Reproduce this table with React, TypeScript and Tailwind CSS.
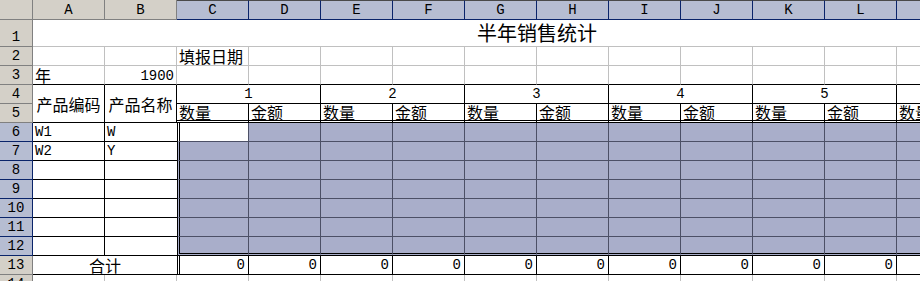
import React from 'react';

const cols = ['A', 'B', 'C', 'D', 'E', 'F', 'G', 'H', 'I', 'J', 'K', 'L', 'M'];
const mono = "font-['Liberation_Mono',monospace] text-[14px]";
const cjk = "font-['Noto_Sans_CJK_SC',sans-serif] text-[16px]";
const base = 'flex whitespace-nowrap leading-none px-[2px]';

const RowHead = ({ n, sel = false }: { n: number; sel?: boolean }) => (
  <div
    className={`${base} ${mono} items-end justify-center pb-[2px] border-r border-b ${
      sel ? 'bg-[#b6bdd2] border-[#0a246a]' : 'bg-[#d4d0c8] border-[#808080]'
    }`}
  >
    {n}
  </div>
);

const App: React.FC = () => {
  const data: Record<number, [string, string]> = { 6: ['W1', 'W'], 7: ['W2', 'Y'] };

  return (
    <div className="w-[920px] h-[281px] overflow-hidden bg-white text-black">
      <div className="grid grid-cols-[33px_repeat(13,72px)] grid-rows-[20px_27px_repeat(13,19px)]">
        {/* column headers */}
        <div className="bg-[#d4d0c8] border-r border-b border-[#808080]" />
        {cols.map((c, i) => (
          <div
            key={c}
            className={`${base} ${mono} items-center justify-center border-r border-b ${
              i >= 2
                ? 'bg-[#b6bdd2] border-[#0a246a] border-t border-t-[#4a4a4a]'
                : 'bg-[#d4d0c8] border-[#808080]'
            }`}
          >
            {c}
          </div>
        ))}

        {/* row 1: title */}
        <RowHead n={1} />
        <div className="col-span-13 border-b border-[#c0c0c0]">
          <div className="w-[1008px] h-full flex items-end justify-center pb-[3px] leading-none font-['Noto_Sans_CJK_SC',sans-serif] text-[20px]">
            半年销售统计
          </div>
        </div>

        {/* row 2 */}
        <RowHead n={2} />
        {cols.map((c) => (
          <div key={c} className={`${base} ${cjk} items-end pb-[1px] border-r border-b border-[#c0c0c0]`}>
            {c === 'C' ? '填报日期' : ''}
          </div>
        ))}

        {/* row 3 */}
        <RowHead n={3} />
        {cols.map((c) => (
          <div
            key={c}
            className={`${base} items-end pb-[1px] border-r border-b border-[#c0c0c0] border-b-black ${
              c === 'A' ? cjk : `${mono} justify-end`
            }`}
          >
            {c === 'A' ? '年' : c === 'B' ? '1900' : ''}
          </div>
        ))}

        {/* rows 4-5: headers */}
        <RowHead n={4} />
        <div className={`${base} ${cjk} row-span-2 items-center justify-center border-r border-b border-black`}>产品编码</div>
        <div className={`${base} ${cjk} row-span-2 items-center justify-center border-r border-b border-black`}>产品名称</div>
        {[1, 2, 3, 4, 5].map((m) => (
          <div key={m} className={`${base} ${mono} col-span-2 items-end justify-center pb-[2px] border-r border-b border-black`}>
            {m}
          </div>
        ))}
        <div className={`${base} border-r border-b border-black`} />

        <RowHead n={5} />
        {cols.slice(2).map((c, i) => (
          <div
            key={c}
            className={`${base} ${cjk} items-end border-r border-black border-b-[3px] border-double`}
          >
            {i % 2 === 0 ? '数量' : '金额'}
          </div>
        ))}

        {/* rows 6-12: selection */}
        {[6, 7, 8, 9, 10, 11, 12].map((r) => (
          <React.Fragment key={r}>
            <RowHead n={r} sel />
            <div className={`${base} ${mono} items-end pb-[2px] border-r border-b border-black`}>{data[r]?.[0] ?? ''}</div>
            <div className={`${base} ${mono} items-end pb-[2px] border-b border-black`}>{data[r]?.[1] ?? ''}</div>
            {cols.slice(2).map((c, i) => (
              <div
                key={c}
                className={[
                  'border-r border-[#4c5066]',
                  r === 6 && i === 0 ? 'bg-white' : 'bg-[#a9aeca]',
                  i === 0 ? 'border-l-[3px] border-l-black border-double' : '',
                  r === 12 ? 'border-b-[3px] border-b-black border-double' : 'border-b',
                ].join(' ')}
              />
            ))}
          </React.Fragment>
        ))}

        {/* row 13: totals */}
        <RowHead n={13} />
        <div className={`${base} ${cjk} col-span-2 items-end justify-center pb-[1px] border-b border-black`}>合计</div>
        {cols.slice(2).map((c, i) => (
          <div
            key={c}
            className={`${base} ${mono} items-end justify-end pb-[2px] pr-[3px] border-r border-b border-black ${
              i === 0 ? 'border-l-[3px] border-double' : ''
            }`}
          >
            0
          </div>
        ))}

        {/* row 14 */}
        <RowHead n={14} />
        {cols.map((c) => (
          <div key={c} className="border-r border-b border-[#c0c0c0]" />
        ))}
      </div>
    </div>
  );
};

export default App;
